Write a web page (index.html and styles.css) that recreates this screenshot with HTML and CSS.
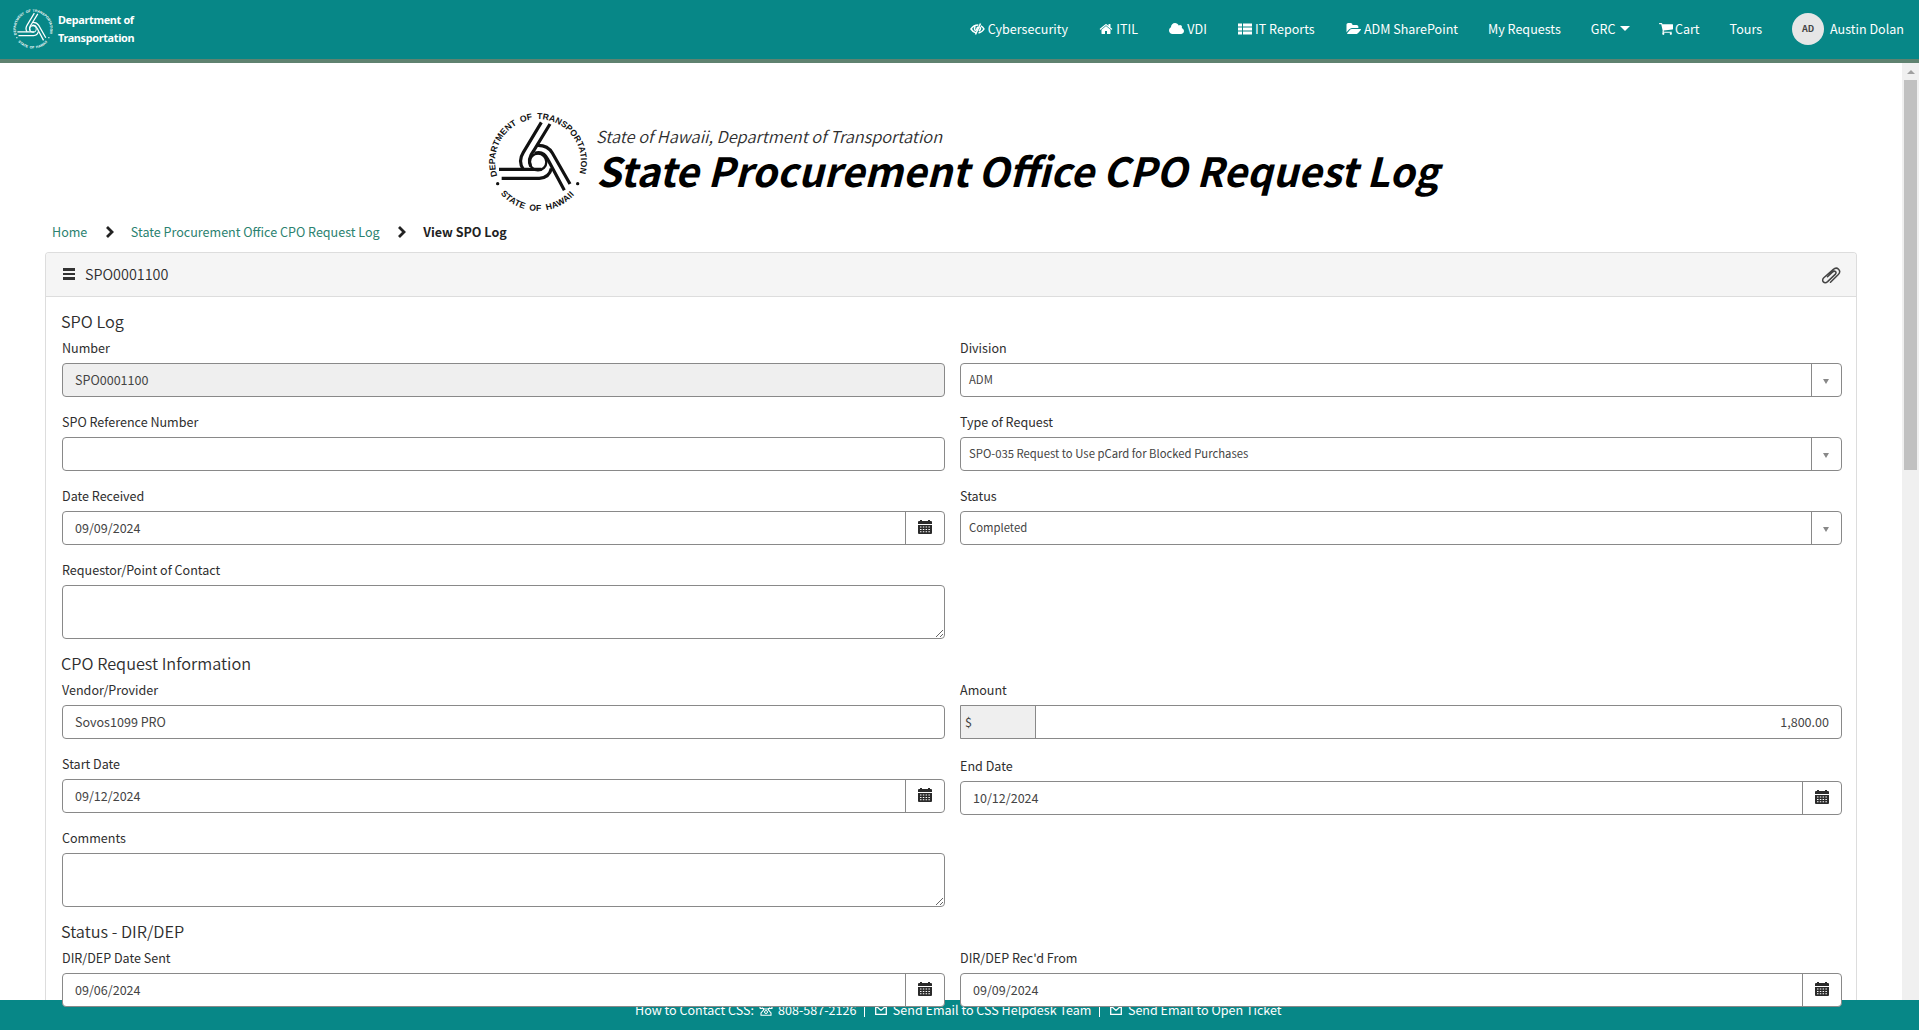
FILE: index.html
```html
<!DOCTYPE html>
<html lang="en">
<head>
<meta charset="utf-8">
<title>State Procurement Office CPO Request Log</title>
<link rel="stylesheet" href="styles.css">
</head>
<body>
<svg class="defs" aria-hidden="true">
  <defs>
    <path id="arc-top" d="M82 229A129 129 0 1 1 326 229"/>
    <path id="arc-bottom" d="M92 282A147 147 0 0 0 316 282"/>
    <symbol id="seal" viewBox="54 37 300 300">
      <g fill="none" stroke="currentColor" stroke-width="9.500">
        <circle cx="204" cy="187" r="25" stroke-width="7"/>
        <path d="M214 68L160 158Q143 185 160 209M240 73L190 155Q172 178 182 200"/>
        <path d="M87 209H214M95 236H208Q238 234 244 206"/>
        <path d="M202 137Q233 136 247 160L300 253M194 161Q220 152 234 180L283 272"/>
      </g>
      <g fill="currentColor" class="seal-text">
        <text textLength="482"><textPath href="#arc-top">DEPARTMENT OF TRANSPORTATION</textPath></text>
        <text textLength="250"><textPath href="#arc-bottom">STATE OF HAWAII</textPath></text>
        <circle cx="83" cy="252" r="5"/><circle cx="323" cy="252" r="5"/>
      </g>
    </symbol>
    <symbol id="calendar" viewBox="0 0 14 14">
      <path fill="currentColor" fill-rule="evenodd" d="M2 0h2v1h6V0h2v1h1q1 0 1 1v2H0V2q0-1 1-1h1zM0 5h14v8q0 1-1 1H1q-1 0-1-1zM2 6.500v1h1.500v-1zm2.800 0v1h1.500v-1zm2.800 0v1h1.500v-1zm2.800 0v1h1.500v-1zM2 8.900v1h1.500v-1zm2.800 0v1h1.500v-1zm2.800 0v1h1.500v-1zm2.800 0v1h1.500v-1zM2 11.300v1h1.500v-1zm2.800 0v1h1.500v-1zm2.800 0v1h1.500v-1zm2.800 0v1h1.500v-1z"/>
    </symbol>
    <symbol id="chevron" viewBox="0 0 8 12"><path d="M1 1l5 5-5 5" fill="none" stroke="currentColor" stroke-width="2.800"/></symbol>
    <symbol id="mail" viewBox="0 0 12 10"><path d="M.7.7h10.600v8.600H.7zM1 1l5 4.500L11 1" fill="none" stroke="currentColor" stroke-width="1.300"/></symbol>
  </defs>
</svg>

<header class="navbar">
  <a class="brand">
    <svg class="brand-seal"><use href="#seal"/></svg>
    <span>Department of<br>Transportation</span>
  </a>
  <nav class="nav">
    <a class="nav-item spaced"><svg class="ico-eye" viewBox="0 0 15 12"><g fill="none" stroke="currentColor" stroke-width="1.500"><path d="M6.200 9.900Q3 9.300 1 6q2.700-4 7.300-3.900M10.800 2.900Q13 4 14 6q-1.800 3.200-5.500 3.900"/><path d="M5 3.200Q3.800 5.700 5.600 8M10.300 4.200q.6 2.600-1.400 4M10.500.5l-5 11"/><path d="M7.800 3.800L6.200 7.500"/></g></svg><span>Cybersecurity</span></a>
    <a class="nav-item spaced"><svg class="ico" viewBox="64 128 1664 1536"><path fill="currentColor" d="M1472 992v480q0 26-19 45t-45 19h-384v-384h-256v384h-384q-26 0-45-19t-19-45v-480q0-1 .5-3t.5-3l575-474 575 474q1 2 1 6zm223-69l-62 74q-8 9-21 11h-3q-13 0-21-7l-692-577-692 577q-12 8-24 7-13-2-21-11l-62-74q-8-10-7-23.500t11-21.500l719-599q32-26 76-26t76 26l244 204v-195q0-14 9-23t23-9h192q14 0 23 9t9 23v408l219 182q10 8 11 21.500t-7 23.500z"/></svg><span>ITIL</span></a>
    <a class="nav-item spaced"><svg class="ico-wide" viewBox="64 192 1920 1408"><path fill="currentColor" d="M1984 1152q0 159-112.500 271.500t-271.500 112.500h-1088q-185 0-316.500-131.500t-131.500-316.500q0-132 71-241.500t187-163.500q-2-28-2-43 0-212 150-362t362-150q158 0 286.500 88t187.500 230q70-62 166-62 106 0 181 75t75 181q0 75-41 138 129 30 213 134.500t84 239.500z"/></svg><span>VDI</span></a>
    <a class="nav-item spaced"><svg class="ico" viewBox="0 0 14 12"><path fill="currentColor" d="M0 .5h4v3H0zM5 .5h9v3H5zM0 4.500h4v3H0zM5 4.500h9v3H5zM0 8.500h4v3H0zM5 8.500h9v3H5z"/></svg><span>IT Reports</span></a>
    <a class="nav-item"><svg class="ico-wide" viewBox="0 192 1943 1408"><path fill="currentColor" d="M1943 952q0 31-31 66l-336 396q-43 51-120.500 86.500t-143.500 35.500h-1088q-34 0-60.500-13t-26.500-43q0-31 31-66l336-396q43-51 120.500-86.500t143.500-35.500h1088q34 0 60.500 13t26.500 43zm-343-344v160h-832q-94 0-197 47.500t-164 119.500l-337 396-5 6q0-4-.5-12.500t-.5-12.500v-960q0-92 66-158t158-66h320q92 0 158 66t66 158v32h544q92 0 158 66t66 158z"/></svg><span>ADM SharePoint</span></a>
    <a class="nav-item"><span>My Requests</span></a>
    <a class="nav-item grc"><span>GRC</span><i class="caret"></i></a>
    <a class="nav-item cart"><svg class="ico" viewBox="64 256 1664 1408"><path fill="currentColor" d="M704 1536q0 52-38 90t-90 38-90-38-38-90 38-90 90-38 90 38 38 90zm896 0q0 52-38 90t-90 38-90-38-38-90 38-90 90-38 90 38 38 90zm128-1088v512q0 24-16.500 42.500t-40.500 21.500l-1044 122q13 60 13 70 0 16-24 64h920q26 0 45 19t19 45-19 45-45 19h-1024q-26 0-45-19t-19-45q0-11 8-31.500t16-36 21.500-40 15.500-29.500l-177-823h-204q-26 0-45-19t-19-45 19-45 45-19h256q16 0 28.500 6.500t19.500 15.500 13 24.500 8 26 5.500 29.500 4.500 26h1201q26 0 45 19t19 45z"/></svg><span>Cart</span></a>
    <a class="nav-item"><span>Tours</span></a>
    <a class="nav-item user"><b class="avatar">AD</b><span>Austin Dolan</span></a>
  </nav>
</header>

<div class="viewport">
  <main class="page">
    <div class="title">
      <svg class="title-seal"><use href="#seal"/></svg>
      <div>
        <p class="subtitle">State of Hawaii, Department of Transportation</p>
        <h1>State Procurement Office CPO Request Log</h1>
      </div>
    </div>

    <nav class="crumbs">
      <a>Home</a><svg class="chev"><use href="#chevron"/></svg>
      <a>State Procurement Office CPO Request Log</a><svg class="chev"><use href="#chevron"/></svg>
      <strong>View SPO Log</strong>
    </nav>

    <section class="panel">
      <header class="panel-head">
        <i class="burger"></i><span>SPO0001100</span>
        <svg class="clip" viewBox="0 0 20 18"><path d="M9.500 16.300l7.800-7.700c3.600-4-1.200-8.600-5.200-5L2.800 11.800c-3 3 .6 6.600 3.800 3.800l7.600-7.200c2-2.300-.4-4.300-2.500-2.500L6.500 10.700" fill="none" stroke="currentColor" stroke-width="1.500" stroke-linecap="round"/></svg>
      </header>
      <div class="panel-body">
        <h2>SPO Log</h2>
        <div class="cols">
          <div>
            <div class="field"><label>Number</label><div class="input readonly">SPO0001100</div></div>
            <div class="field"><label>SPO Reference Number</label><div class="input"></div></div>
            <div class="field"><label>Date Received</label><div class="group"><span class="value">09/09/2024</span><span class="addon"><svg><use href="#calendar"/></svg></span></div></div>
            <div class="field"><label>Requestor/Point of Contact</label><textarea></textarea></div>
          </div>
          <div>
            <div class="field"><label>Division</label><div class="group select"><span class="value">ADM</span><span class="arrow"></span></div></div>
            <div class="field"><label>Type of Request</label><div class="group select"><span class="value">SPO-035 Request to Use pCard for Blocked Purchases</span><span class="arrow"></span></div></div>
            <div class="field"><label>Status</label><div class="group select"><span class="value">Completed</span><span class="arrow"></span></div></div>
          </div>
        </div>

        <h2>CPO Request Information</h2>
        <div class="cols">
          <div>
            <div class="field"><label>Vendor/Provider</label><div class="input">Sovos1099 PRO</div></div>
            <div class="field"><label>Start Date</label><div class="group"><span class="value">09/12/2024</span><span class="addon"><svg><use href="#calendar"/></svg></span></div></div>
            <div class="field"><label>Comments</label><textarea></textarea></div>
          </div>
          <div>
            <div class="field amount"><label>Amount</label><div class="group money"><span class="currency">$</span><span class="value">1,800.00</span></div></div>
            <div class="field"><label>End Date</label><div class="group"><span class="value">10/12/2024</span><span class="addon"><svg><use href="#calendar"/></svg></span></div></div>
          </div>
        </div>

        <h2>Status - DIR/DEP</h2>
        <div class="cols">
          <div class="field"><label>DIR/DEP Date Sent</label><div class="group"><span class="value">09/06/2024</span><span class="addon"><svg><use href="#calendar"/></svg></span></div></div>
          <div class="field"><label>DIR/DEP Rec'd From</label><div class="group"><span class="value">09/09/2024</span><span class="addon"><svg><use href="#calendar"/></svg></span></div></div>
        </div>
      </div>
    </section>
  </main>
  <div class="scrollbar"><i class="scroll-up"></i><i class="scroll-thumb"></i></div>
</div>

<footer class="footer">
  <span>How to Contact CSS:</span>
  <svg class="phone" viewBox="0 0 14 11"><path d="M1 3.500V2q6-2.500 12 0v1.500h-2.500V2.500M3.500 2.500v1H1M4.500 3v2L2 8v2.300h10V8L9.500 5V3M4.500 4h5" fill="none" stroke="currentColor" stroke-width="1.100"/><circle cx="7" cy="7" r="1.500" fill="none" stroke="currentColor"/></svg>
  <span>808-587-2126</span><i class="bar"></i>
  <svg class="mail"><use href="#mail"/></svg><span>Send Email to CSS Helpdesk Team</span><i class="bar"></i>
  <svg class="mail"><use href="#mail"/></svg><span>Send Email to Open Ticket</span>
</footer>
</body>
</html>
```
FILE: styles.css
```css
* { box-sizing: border-box; }

body {
  margin: 0;
  height: 1030px;
  overflow: hidden;
  display: flex;
  flex-direction: column;
  font: 12.55px/20px "Noto Sans CJK SC", "Open Sans", sans-serif;
  color: #2e2e2e;
  background: #fff;
}

i { font-style: normal; }
svg { display: block; flex: none; }
.defs { position: absolute; width: 0; height: 0; }

.navbar {
  flex: none;
  height: 63px;
  padding: 0 15px 2px 13px;
  display: flex;
  justify-content: space-between;
  align-items: center;
  background: #078787;
  border-bottom: 4px solid #5f8270;
  color: #fff;
}
.brand {
  display: flex;
  align-items: center;
  gap: 5px;
  font: bold 10.9px/17.500px "Noto Sans", sans-serif;
  letter-spacing: -0.35px;
}
.brand-seal { width: 40px; height: 40px; }
.seal-text { font: bold 26px "Liberation Sans", sans-serif; word-spacing: 6px; letter-spacing: 0; }

.nav { display: flex; align-items: center; gap: 30px; }
.nav-item { display: flex; align-items: center; gap: 3px; white-space: nowrap; }
.spaced { margin-right: 1.3px; }
.grc { margin-right: -1px; }
.cart { gap: 1.5px; }
.ico { width: 14px; height: 12px; }
.ico-wide { width: 15px; height: 12px; }
.ico-eye { width: 15px; height: 12px; }
.caret {
  margin-left: 2px;
  border: 5px solid transparent;
  border-top-color: currentColor;
  border-bottom: 0;
}
.user { gap: 6px; }
.avatar {
  width: 32px;
  height: 32px;
  border-radius: 50%;
  background: #e6e6e6;
  color: #444;
  font-size: 9px;
  line-height: 31px;
  text-align: center;
}

.viewport { flex: none; height: 937px; display: flex; }
.page { flex: 1; padding: 49px 45px 0; }

.title { display: flex; gap: 9px; padding-left: 443px; height: 100px; }
.title-seal { width: 100px; height: 100px; color: #111; }
.subtitle {
  margin: 12px 0 0 -1px;
  font-size: 16.35px;
  line-height: 24px;
  font-style: italic;
  font-weight: 350;
}
h1 {
  margin: -2px 0 0 -1px;
  font-size: 40.25px;
  line-height: 48px;
  font-style: italic;
  font-weight: 700;
  color: #000;
  white-space: nowrap;
}

.crumbs { display: flex; align-items: center; padding-left: 7px; height: 40px; color: #222; }
.crumbs a { color: #2b8270; }
.chev { width: 8px; height: 12px; margin: 0 17px 0 18.5px; }

.panel {
  height: 748px;
  border: 1px solid #ddd;
  border-bottom: 0;
  border-radius: 4px 4px 0 0;
}
.panel-head {
  display: flex;
  align-items: center;
  gap: 10px;
  height: 44px;
  padding: 0 15px 1px 17px;
  background: #f5f5f5;
  border-bottom: 1px solid #ddd;
  border-radius: 3px 3px 0 0;
  font-size: 14.4px;
  font-weight: 350;
}
.burger {
  width: 12px;
  height: 12px;
  background: linear-gradient(#333 0 3px, transparent 3px 5px, #333 5px 7px, transparent 7px 9px, #333 9px);
}
.clip { width: 20px; height: 18px; margin: 1px 0 0 auto; color: #444; }

.panel-body { padding: 0 14px 0 16px; }
h2 {
  margin: 0 0 0 -1px;
  padding-top: 12px;
  height: 41px;
  font-size: 16.3px;
  line-height: 24px;
  font-weight: 350;
}
.cols { display: grid; grid-template-columns: 883px 882px; gap: 15px; }
.field { margin-bottom: 15px; }
.field:last-child { margin-bottom: 0; }
.amount { margin-bottom: 17px; }
label { display: block; height: 25px; }

.input, .group, textarea {
  position: relative;
  display: flex;
  width: 100%;
  height: 34px;
  line-height: 32px;
  border: 1px solid #898989;
  border-radius: 4px;
  background: #fff;
  color: #444;
}
.input { padding: 0 12px; }
.readonly { background: #efefef; }
textarea { display: block; height: 54px; margin: 0; resize: vertical; }
.value { flex: 1; padding: 0 12px; }
.addon {
  width: 39px;
  border-left: 1px solid #898989;
  display: grid;
  place-items: center;
  color: #2a2a2a;
}
.addon svg { width: 14px; height: 14px; margin: -2px 1px 0 0; }
.select { font-size: 11.3px; line-height: 31px; }
.select .value { padding: 0 8px; }
.arrow { width: 30px; border-left: 1px solid #898989; display: grid; place-items: center; }
.arrow::before {
  content: "";
  border: 3px solid transparent;
  border-top: 5px solid #888;
  border-bottom: 0;
  margin: 2px 1px 0 0;
}
.money { border-radius: 0 4px 4px 0; }
.currency { width: 75px; padding-left: 4px; background: #efefef; border-right: 1px solid #898989; }
.money .value { text-align: right; }

.scrollbar { width: 17px; background: #f0f0f0; padding: 7px 2px 0; }
.scroll-up {
  display: block;
  margin: 0 3px 6px;
  border: 4px solid transparent;
  border-top: 0;
  border-bottom-color: #a0a0a0;
}
.scroll-thumb { display: block; height: 390px; background: #c1c1c1; }

.footer {
  flex: none;
  height: 30px;
  padding-left: 635px;
  display: flex;
  align-items: center;
  background: #078787;
  color: #fff;
  white-space: nowrap;
  padding-bottom: 10px;
}
.phone { width: 14px; height: 11px; margin: 0 5px; }
.mail { width: 12px; height: 10px; margin: 0 6px 0 10px; }
.bar { width: 1px; height: 14px; margin-left: 7.5px; background: #fff; }
```
